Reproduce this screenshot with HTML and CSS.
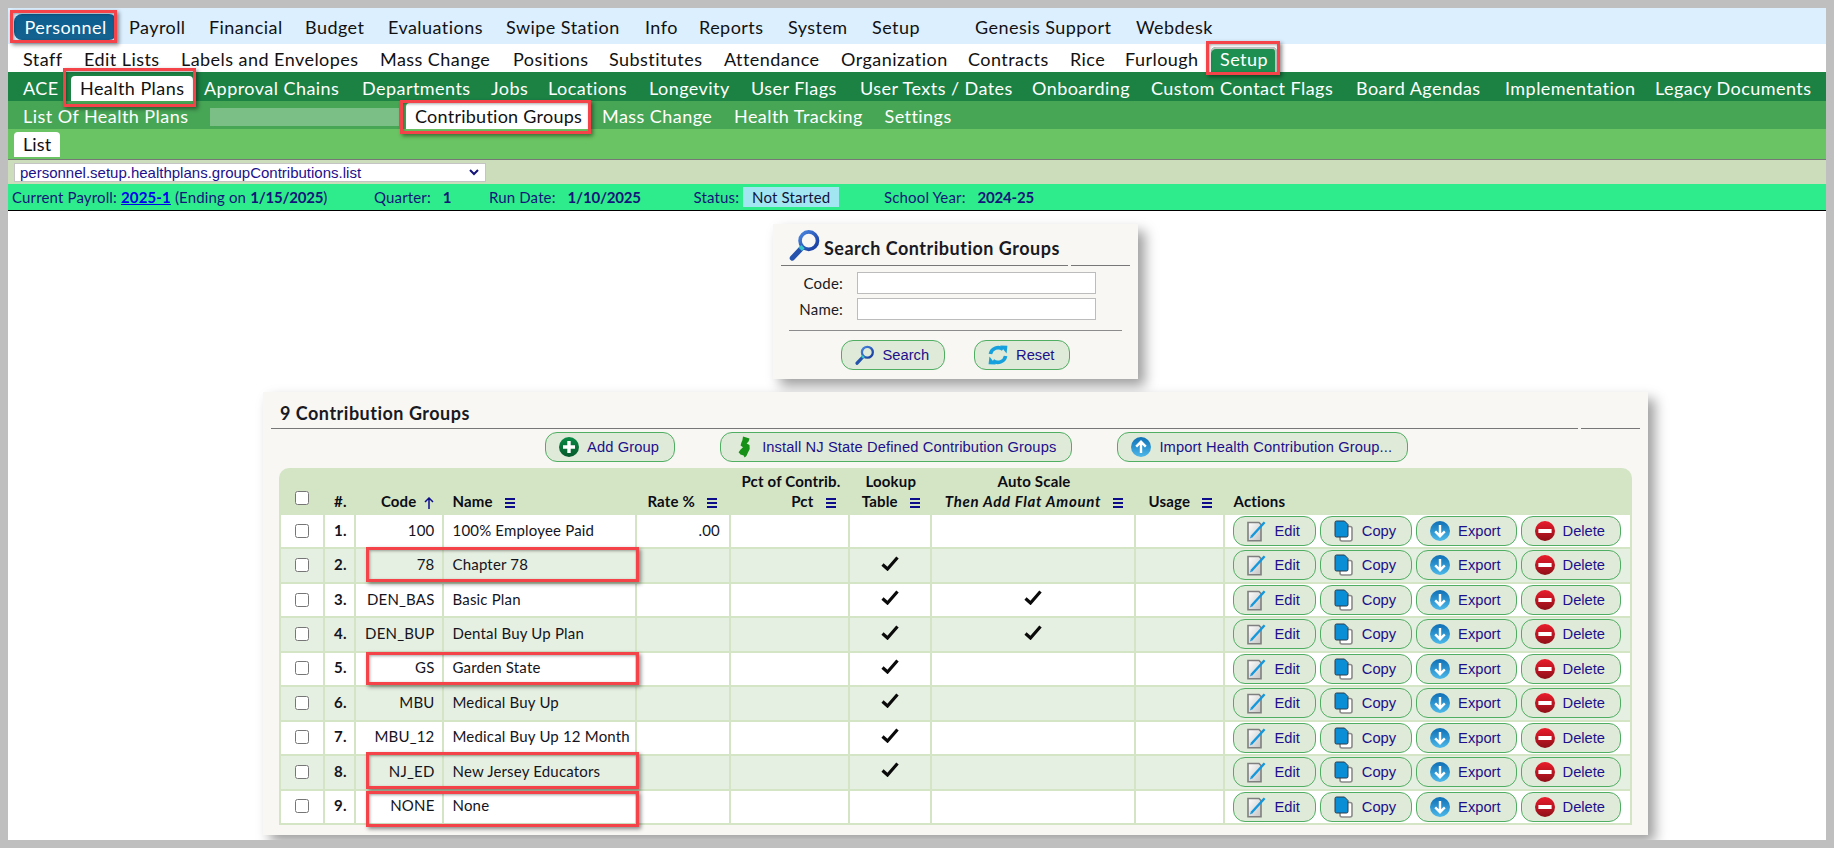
FILE: index.html
```html
<!DOCTYPE html>
<html lang="en">
<head>
<meta charset="utf-8">
<title>Contribution Groups</title>
<link rel="stylesheet" href="styles.css">
</head>
<body>
<svg class="defs" width="0" height="0" aria-hidden="true">
  <defs>
    <linearGradient id="gBlue" x1="0" y1="0" x2="0" y2="1"><stop offset="0" stop-color="#0f6fb5"/><stop offset="1" stop-color="#4db9ea"/></linearGradient>
    <linearGradient id="gRed" x1="0" y1="0" x2="0" y2="1"><stop offset="0" stop-color="#ea1c2c"/><stop offset="1" stop-color="#8f0f18"/></linearGradient>
    <linearGradient id="gGreen" x1="0" y1="0" x2="0" y2="1"><stop offset="0" stop-color="#0a8a45"/><stop offset="1" stop-color="#06592c"/></linearGradient>
    <linearGradient id="gDoc" x1="0" y1="0" x2="1" y2="1"><stop offset="0" stop-color="#ffffff"/><stop offset="1" stop-color="#c4c4c4"/></linearGradient>
    <linearGradient id="gLens" x1="0" y1="0" x2="1" y2="1"><stop offset="0" stop-color="#4a86e0"/><stop offset="1" stop-color="#14389c"/></linearGradient>
    <symbol id="i-search" viewBox="0 0 22 22">
      <circle cx="13.6" cy="8" r="6" fill="none" stroke="url(#gLens)" stroke-width="2.5"/>
      <path d="M2.3 20 8.6 13.2" stroke="#2553ad" stroke-width="3.6" stroke-linecap="round"/>
      <path d="M7.8 14 9.6 12.1" stroke="#35c3c9" stroke-width="3.2"/>
    </symbol>
    <symbol id="i-reset" viewBox="0 0 20 22">
      <path d="M2.4 10A7.8 7.8 0 0 1 15 5.4" fill="none" stroke="#16a0dd" stroke-width="3.6"/>
      <path d="M12.2 1.4 19.4 1.8 18.6 9.4Z" fill="#16a0dd"/>
      <path d="M17.6 12A7.8 7.8 0 0 1 5 16.6" fill="none" stroke="#16a0dd" stroke-width="3.6"/>
      <path d="M7.8 20.6 .6 20.2 1.4 12.6Z" fill="#16a0dd"/>
    </symbol>
    <symbol id="i-add" viewBox="0 0 20 20">
      <circle cx="10" cy="10" r="10" fill="url(#gGreen)"/>
      <path d="M10 4v12M4 10h12" stroke="#fff" stroke-width="3.4"/>
    </symbol>
    <symbol id="i-nj" viewBox="0 0 20 22">
      <path d="M9 .5 15.5 2.5 14.6 5.5 12.6 7.5 15.5 9 15.7 13 14 16.5 12.4 20 10.6 21.5 9.6 19.5 6.5 18.6 4.6 16.2 6.6 13.4 9 11.2 6.6 9.6 7.4 6.4 8.4 4.2Z" fill="#169016"/>
    </symbol>
    <symbol id="i-up" viewBox="0 0 20 20">
      <circle cx="10" cy="10" r="10" fill="url(#gBlue)"/>
      <path d="M10 16V5M5.2 9.6 10 4.8l4.8 4.8" fill="none" stroke="#fff" stroke-width="2.4"/>
    </symbol>
    <symbol id="i-down" viewBox="0 0 20 20">
      <circle cx="10" cy="10" r="10" fill="url(#gBlue)"/>
      <path d="M10 4v11M5.2 10.4 10 15.2l4.8-4.8" fill="none" stroke="#fff" stroke-width="2.4"/>
    </symbol>
    <symbol id="i-del" viewBox="0 0 20 20">
      <circle cx="10" cy="10" r="10" fill="url(#gRed)"/>
      <rect x="3.4" y="8" width="13.2" height="4" fill="#fff"/>
    </symbol>
    <symbol id="i-edit" viewBox="0 0 20 22">
      <path d="M1 2.5H12L14 4.5V20.8H1Z" fill="url(#gDoc)" stroke="#7f7f7f" stroke-width="1.6"/>
      <path d="M4.4 16.8 17.6 2.2" stroke="#1497dc" stroke-width="2.4"/>
      <path d="M2.9 18.6 4 15.8 5.4 17.2Z" fill="#1497dc"/>
    </symbol>
    <symbol id="i-copy" viewBox="0 0 20 22">
      <rect x="6" y="6.5" width="12" height="14.5" rx="2" fill="#fff" stroke="#8a8a8a" stroke-width="1.6"/>
      <path d="M2.5 1H10.5L14 4.5V15.5Q14 17 12.5 17H2.5Q1 17 1 15.5V2.5Q1 1 2.5 1Z" fill="#0a8fd6" stroke="#2c3a4a" stroke-width="1"/>
    </symbol>
    <symbol id="i-menu" viewBox="0 0 10 10">
      <path d="M0 0h10v2H0zM0 4h10v2H0zM0 8h10v2H0z" fill="#0d0d8c"/>
    </symbol>
    <symbol id="i-sort" viewBox="0 0 10 12">
      <path d="M5 12V1M1 5 5 1l4 4" fill="none" stroke="#0d0d8c" stroke-width="1.5"/>
    </symbol>
    <symbol id="i-check" viewBox="0 0 18 15">
      <path d="M1.5 8.5 6.5 13 16.5 1.5" fill="none" stroke="#0a0a0a" stroke-width="3.2"/>
    </symbol>
  </defs>
</svg>

<div class="app">
  <nav class="nav nav-main">
    <a class="tab tab-active-main">Personnel</a><a class="tab">Payroll</a><a class="tab">Financial</a><a class="tab">Budget</a><a class="tab">Evaluations</a><a class="tab">Swipe Station</a><a class="tab">Info</a><a class="tab">Reports</a><a class="tab">System</a><a class="tab">Setup</a><a class="tab">Genesis Support</a><a class="tab">Webdesk</a>
  </nav>
  <nav class="nav nav-sub">
    <a class="tab">Staff</a><a class="tab">Edit Lists</a><a class="tab">Labels and Envelopes</a><a class="tab">Mass Change</a><a class="tab">Positions</a><a class="tab">Substitutes</a><a class="tab">Attendance</a><a class="tab">Organization</a><a class="tab">Contracts</a><a class="tab">Rice</a><a class="tab">Furlough</a><a class="tab tab-active-green">Setup</a>
  </nav>
  <nav class="nav nav-setup">
    <a class="tab">ACE</a><a class="tab tab-active">Health Plans</a><a class="tab">Approval Chains</a><a class="tab">Departments</a><a class="tab">Jobs</a><a class="tab">Locations</a><a class="tab">Longevity</a><a class="tab">User Flags</a><a class="tab">User Texts / Dates</a><a class="tab">Onboarding</a><a class="tab">Custom Contact Flags</a><a class="tab">Board Agendas</a><a class="tab">Implementation</a><a class="tab">Legacy Documents</a>
  </nav>
  <nav class="nav nav-plans">
    <a class="tab">List Of Health Plans</a><span class="blur-block"></span><a class="tab tab-active">Contribution Groups</a><a class="tab">Mass Change</a><a class="tab">Health Tracking</a><a class="tab">Settings</a>
  </nav>
  <nav class="nav nav-list">
    <a class="tab tab-active">List</a>
  </nav>
  <div class="page-picker">
    <select class="page-select"><option>personnel.setup.healthplans.groupContributions.list</option></select>
  </div>
  <div class="status-bar">
    <span class="status-item">Current Payroll:&nbsp;<a class="status-link">2025-1</a>&nbsp;(Ending on&nbsp;<b>1/15/2025</b>)</span>
    <span class="status-item status-gap">Quarter: <b>1</b></span>
    <span class="status-item status-gap">Run Date: <b>1/10/2025</b></span>
    <span class="status-item status-badge-wrap">Status: <span class="status-badge">Not Started</span></span>
    <span class="status-item status-gap">School Year: <b>2024-25</b></span>
  </div>

  <main class="content">
    <section class="card search-card">
      <header class="card-head search-head">
        <h2 class="card-title search-title"><svg class="search-big"><use href="#i-search"/></svg>Search Contribution Groups</h2>
        <span class="card-fill"></span>
      </header>
      <form class="search-form">
        <label class="field-label">Code:</label><input class="field-input" type="text">
        <label class="field-label">Name:</label><input class="field-input" type="text">
      </form>
      <div class="search-actions">
        <button class="btn" type="button"><svg class="ico"><use href="#i-search"/></svg>Search</button>
        <button class="btn" type="button"><svg class="ico"><use href="#i-reset"/></svg>Reset</button>
      </div>
    </section>

    <section class="card list-card">
      <header class="card-head list-head">
        <h2 class="card-title list-title">9 Contribution Groups</h2>
        <span class="card-fill"></span>
      </header>
      <div class="toolbar">
        <button class="btn" type="button"><svg class="ico"><use href="#i-add"/></svg>Add Group</button>
        <button class="btn" type="button"><svg class="ico"><use href="#i-nj"/></svg>Install NJ State Defined Contribution Groups</button>
        <button class="btn" type="button"><svg class="ico"><use href="#i-up"/></svg>Import Health Contribution Group...</button>
      </div>
      <table class="grid">
        <colgroup>
          <col class="c-check"><col class="c-num"><col class="c-code"><col class="c-name"><col class="c-rate"><col class="c-pct"><col class="c-look"><col class="c-auto"><col class="c-usage"><col class="c-act">
        </colgroup>
        <thead>
          <tr>
            <th class="center"><input class="check" type="checkbox"></th>
            <th>#.</th>
            <th class="right code-head">Code<svg class="sort"><use href="#i-sort"/></svg></th>
            <th>Name<svg class="menu"><use href="#i-menu"/></svg></th>
            <th class="right">Rate %<svg class="menu"><use href="#i-menu"/></svg></th>
            <th class="right">Pct of Contrib.<br>Pct<svg class="menu"><use href="#i-menu"/></svg></th>
            <th class="center">Lookup<br>Table<svg class="menu"><use href="#i-menu"/></svg></th>
            <th class="center">Auto Scale<br><i>Then Add Flat Amount</i><svg class="menu"><use href="#i-menu"/></svg></th>
            <th class="center">Usage<svg class="menu"><use href="#i-menu"/></svg></th>
            <th>Actions</th>
          </tr>
        </thead>
        <tbody>
          <tr>
            <td class="center"><input class="check" type="checkbox"></td><td class="num">1.</td><td class="right">100</td><td>100% Employee Paid</td><td class="right">.00</td><td></td><td></td><td></td><td></td>
            <td class="actions"><div class="action-row"><button class="btn" type="button"><svg class="ico"><use href="#i-edit"/></svg>Edit</button><button class="btn" type="button"><svg class="ico"><use href="#i-copy"/></svg>Copy</button><button class="btn" type="button"><svg class="ico"><use href="#i-down"/></svg>Export</button><button class="btn" type="button"><svg class="ico"><use href="#i-del"/></svg>Delete</button></div></td>
          </tr>
          <tr>
            <td class="center"><input class="check" type="checkbox"></td><td class="num">2.</td><td class="right">78</td><td>Chapter 78</td><td></td><td></td><td class="center"><svg class="tick"><use href="#i-check"/></svg></td><td></td><td></td>
            <td class="actions"><div class="action-row"><button class="btn" type="button"><svg class="ico"><use href="#i-edit"/></svg>Edit</button><button class="btn" type="button"><svg class="ico"><use href="#i-copy"/></svg>Copy</button><button class="btn" type="button"><svg class="ico"><use href="#i-down"/></svg>Export</button><button class="btn" type="button"><svg class="ico"><use href="#i-del"/></svg>Delete</button></div></td>
          </tr>
          <tr>
            <td class="center"><input class="check" type="checkbox"></td><td class="num">3.</td><td class="right">DEN_BAS</td><td>Basic Plan</td><td></td><td></td><td class="center"><svg class="tick"><use href="#i-check"/></svg></td><td class="center"><svg class="tick"><use href="#i-check"/></svg></td><td></td>
            <td class="actions"><div class="action-row"><button class="btn" type="button"><svg class="ico"><use href="#i-edit"/></svg>Edit</button><button class="btn" type="button"><svg class="ico"><use href="#i-copy"/></svg>Copy</button><button class="btn" type="button"><svg class="ico"><use href="#i-down"/></svg>Export</button><button class="btn" type="button"><svg class="ico"><use href="#i-del"/></svg>Delete</button></div></td>
          </tr>
          <tr>
            <td class="center"><input class="check" type="checkbox"></td><td class="num">4.</td><td class="right">DEN_BUP</td><td>Dental Buy Up Plan</td><td></td><td></td><td class="center"><svg class="tick"><use href="#i-check"/></svg></td><td class="center"><svg class="tick"><use href="#i-check"/></svg></td><td></td>
            <td class="actions"><div class="action-row"><button class="btn" type="button"><svg class="ico"><use href="#i-edit"/></svg>Edit</button><button class="btn" type="button"><svg class="ico"><use href="#i-copy"/></svg>Copy</button><button class="btn" type="button"><svg class="ico"><use href="#i-down"/></svg>Export</button><button class="btn" type="button"><svg class="ico"><use href="#i-del"/></svg>Delete</button></div></td>
          </tr>
          <tr>
            <td class="center"><input class="check" type="checkbox"></td><td class="num">5.</td><td class="right">GS</td><td>Garden State</td><td></td><td></td><td class="center"><svg class="tick"><use href="#i-check"/></svg></td><td></td><td></td>
            <td class="actions"><div class="action-row"><button class="btn" type="button"><svg class="ico"><use href="#i-edit"/></svg>Edit</button><button class="btn" type="button"><svg class="ico"><use href="#i-copy"/></svg>Copy</button><button class="btn" type="button"><svg class="ico"><use href="#i-down"/></svg>Export</button><button class="btn" type="button"><svg class="ico"><use href="#i-del"/></svg>Delete</button></div></td>
          </tr>
          <tr>
            <td class="center"><input class="check" type="checkbox"></td><td class="num">6.</td><td class="right">MBU</td><td>Medical Buy Up</td><td></td><td></td><td class="center"><svg class="tick"><use href="#i-check"/></svg></td><td></td><td></td>
            <td class="actions"><div class="action-row"><button class="btn" type="button"><svg class="ico"><use href="#i-edit"/></svg>Edit</button><button class="btn" type="button"><svg class="ico"><use href="#i-copy"/></svg>Copy</button><button class="btn" type="button"><svg class="ico"><use href="#i-down"/></svg>Export</button><button class="btn" type="button"><svg class="ico"><use href="#i-del"/></svg>Delete</button></div></td>
          </tr>
          <tr>
            <td class="center"><input class="check" type="checkbox"></td><td class="num">7.</td><td class="right">MBU_12</td><td>Medical Buy Up 12 Month</td><td></td><td></td><td class="center"><svg class="tick"><use href="#i-check"/></svg></td><td></td><td></td>
            <td class="actions"><div class="action-row"><button class="btn" type="button"><svg class="ico"><use href="#i-edit"/></svg>Edit</button><button class="btn" type="button"><svg class="ico"><use href="#i-copy"/></svg>Copy</button><button class="btn" type="button"><svg class="ico"><use href="#i-down"/></svg>Export</button><button class="btn" type="button"><svg class="ico"><use href="#i-del"/></svg>Delete</button></div></td>
          </tr>
          <tr>
            <td class="center"><input class="check" type="checkbox"></td><td class="num">8.</td><td class="right">NJ_ED</td><td>New Jersey Educators</td><td></td><td></td><td class="center"><svg class="tick"><use href="#i-check"/></svg></td><td></td><td></td>
            <td class="actions"><div class="action-row"><button class="btn" type="button"><svg class="ico"><use href="#i-edit"/></svg>Edit</button><button class="btn" type="button"><svg class="ico"><use href="#i-copy"/></svg>Copy</button><button class="btn" type="button"><svg class="ico"><use href="#i-down"/></svg>Export</button><button class="btn" type="button"><svg class="ico"><use href="#i-del"/></svg>Delete</button></div></td>
          </tr>
          <tr>
            <td class="center"><input class="check" type="checkbox"></td><td class="num">9.</td><td class="right">NONE</td><td>None</td><td></td><td></td><td></td><td></td><td></td>
            <td class="actions"><div class="action-row"><button class="btn" type="button"><svg class="ico"><use href="#i-edit"/></svg>Edit</button><button class="btn" type="button"><svg class="ico"><use href="#i-copy"/></svg>Copy</button><button class="btn" type="button"><svg class="ico"><use href="#i-down"/></svg>Export</button><button class="btn" type="button"><svg class="ico"><use href="#i-del"/></svg>Delete</button></div></td>
          </tr>
        </tbody>
      </table>
    </section>
  </main>

  <div class="mark mark-personnel"></div>
  <div class="mark mark-setup"></div>
  <div class="mark mark-health"></div>
  <div class="mark mark-contrib"></div>
  <div class="mark mark-row mark-r2"></div>
  <div class="mark mark-row mark-r5"></div>
  <div class="mark mark-row mark-r8"></div>
  <div class="mark mark-row mark-r9"></div>
</div>
</body>
</html>
```
FILE: styles.css
```css
* { box-sizing: border-box; }
html, body { margin: 0; height: 100%; }
body {
  background: #bfbfbf;
  padding: 8px;
  overflow: hidden;
  font-family: Lato, "Noto Sans", sans-serif;
  color: #111;
}
.defs { position: absolute; }
.app {
  position: relative;
  width: 1818px;
  height: 832px;
  background: #fff;
  overflow: hidden;
}

/* Navigation rows */
.nav {
  display: grid;
  align-items: end;
  font-size: 18px;
  letter-spacing: .45px;
  padding-left: 6px;
}
.tab {
  justify-self: start;
  height: 25px;
  line-height: 25px;
  padding: 0 9px;
  white-space: nowrap;
}
.nav-main {
  height: 36px;
  background: #dcefff;
  padding-bottom: 4px;
  grid-template-columns: 106px 80px 96px 83px 118px 139px 54px 89px 84px 103px 161px auto;
}
.nav-main .tab { height: 26px; line-height: 27px; }
.tab-active-main {
  background: linear-gradient(#0c5f91, #14628f);
  color: #fff;
  border-radius: 8px;
  padding: 0 10.5px;
}
.nav-sub {
  height: 28px;
  background: #fff;
  grid-template-columns: 61px 97px 199px 133px 96px 115px 117px 127px 102px 55px 95px auto;
}
.tab-active-green {
  background: #1d8f50;
  color: #fff;
  border-radius: 5px 5px 0 0;
  box-shadow: inset 0 2px 0 #c4c4c4, inset -2px 0 0 #c4c4c4;
}
.nav-setup {
  height: 29px;
  background: #1b8244;
  color: #fff;
  grid-template-columns: 57px 124px 158px 129px 57px 101px 102px 109px 172px 119px 205px 149px 150px auto;
}
.tab-active { background: #fff; color: #111; border-radius: 4px 4px 0 0; }
.nav-plans {
  height: 28px;
  background: #47a556;
  color: #fff;
  grid-template-columns: 195.6px 196.4px 187px 132px 150.5px auto;
}
.nav-plans .tab { height: 26px; line-height: 27px; }
.nav-plans .tab-active { letter-spacing: .25px; }
.blur-block {
  width: 189px;
  height: 18px;
  margin-bottom: 3px;
  background: #7cbf86;
}
.nav-list {
  height: 31px;
  background: #6ac463;
  border-bottom: 1px solid #777;
  padding-bottom: 2px;
}
.nav-list .tab { letter-spacing: .1px; }

/* Page picker */
.page-picker {
  height: 24px;
  background: #cbddba;
  padding: 3px 6px 0;
}
.page-select {
  display: block;
  width: 472px;
  height: 19px;
  padding: 0 0 0 5px;
  appearance: none;
  border: 1px solid #c4c4c4;
  border-radius: 0;
  background: #fff url("data:image/svg+xml,%3Csvg xmlns='http://www.w3.org/2000/svg' width='10' height='7'%3E%3Cpath d='M1 1l4 4 4-4' fill='none' stroke='%2314147a' stroke-width='2'/%3E%3C/svg%3E") no-repeat right 6px center;
  color: #1c108c;
  font: 15px "Liberation Sans", Arial, sans-serif;
}

/* Status bar */
.status-bar {
  display: grid;
  grid-template-columns: 362px 115px 204.5px 190.5px auto;
  align-items: center;
  height: 27px;
  padding: 0 0 1px 4px;
  background: #2eec8b;
  border-bottom: 1px solid #000;
  color: #14147a;
  font-size: 15px;
  letter-spacing: .15px;
}
.status-item { display: flex; align-items: center; white-space: nowrap; }
.status-gap { gap: 12px; }
.status-badge-wrap { gap: 4px; }
.status-item b { font-weight: 700; letter-spacing: -.2px; }
.status-link { color: #0000ee; font-weight: 700; text-decoration: underline; }
.status-badge {
  height: 20px;
  line-height: 20px;
  padding: 0 9px;
  background: #a2e6f2;
  color: #14143a;
}

/* Content */
.content { display: flex; flex-direction: column; align-items: flex-start; }
.card {
  background: #f8f7f4;
  padding: 0 8px;
  box-shadow: 7px 7px 12px rgba(0, 0, 0, .38);
}
.card-head { display: flex; gap: 3px; }
.card-title {
  margin: 0;
  border-bottom: 1px solid #777;
  font-size: 18px;
  line-height: 22px;
  font-weight: 700;
  letter-spacing: .5px;
  color: #1a1a22;
}
.card-fill { flex: 1; border-bottom: 1px solid #777; }

.search-card {
  width: 365px;
  height: 155px;
  margin: 13px 0 0 765px;
}
.search-head { height: 42px; }
.search-title {
  display: flex;
  align-items: flex-end;
  flex: 0 0 287px;
  padding: 0 0 6px 8px;
  white-space: nowrap;
}
.search-big { width: 32px; height: 32px; margin: 0 3px -2px 0; flex: none; }
.search-form {
  display: grid;
  grid-template-columns: 62px 239px;
  column-gap: 14px;
  row-gap: 4px;
  align-items: center;
  padding-top: 6px;
  width: 322px;
}
.field-label {
  text-align: right;
  font-size: 15px;
  letter-spacing: .2px;
  color: #1a1a22;
}
.field-input {
  height: 22px;
  border: 1px solid #bcbcbc;
  background: #fff;
  padding: 0;
}
.search-actions {
  display: flex;
  justify-content: center;
  gap: 29px;
  margin: 10px 8px 0;
  padding-top: 9px;
  border-top: 1px solid #8c8c8c;
}

.btn {
  display: inline-flex;
  align-items: center;
  gap: 8px;
  height: 30px;
  padding: 0 15px 0 13px;
  border: 1px solid #4fae62;
  border-radius: 12px;
  background: #e0ead8;
  color: #1c108c;
  font: 14.7px "Liberation Sans", Arial, sans-serif;
  white-space: nowrap;
}
.ico { width: 20px; height: 22px; flex: none; }

.list-card {
  width: 1385px;
  height: 443px;
  margin: 13px 0 0 255px;
}
.list-head { height: 37px; }
.list-title {
  flex: 0 0 1307px;
  padding: 10px 0 0 9px;
}
.toolbar {
  display: flex;
  gap: 45px;
  margin: 3px 0 6px 274px;
}
.toolbar .btn { letter-spacing: .12px; }

/* Table */
.grid {
  width: 1352.5px;
  margin-left: 8px;
  table-layout: fixed;
  border-collapse: separate;
  border-spacing: 0;
  font-size: 15px;
  letter-spacing: .18px;
  color: #14141c;
}
.c-check { width: 46px; }
.c-num { width: 31px; }
.c-code { width: 87.5px; }
.c-name { width: 193px; }
.c-rate { width: 94.5px; }
.c-pct { width: 118.5px; }
.c-look { width: 82.5px; }
.c-auto { width: 204px; }
.c-usage { width: 88.5px; }
.c-act { width: 407px; }
.grid th {
  height: 47px;
  padding: 0 9px 4px;
  background: #d4e5c6;
  vertical-align: bottom;
  text-align: left;
  font-size: 15px;
  line-height: 20px;
  font-weight: 700;
  color: #0c0c14;
  white-space: nowrap;
}
.grid th i { letter-spacing: .7px; }
.grid th:first-child { border-top-left-radius: 10px; }
.grid th:last-child { border-top-right-radius: 10px; }
.grid td {
  height: 34.44px;
  padding: 0 9px 3px;
  background: #fff;
  border-right: 2px solid #d4e5c6;
  border-bottom: 2px solid #d4e5c6;
  vertical-align: middle;
  white-space: nowrap;
}
.grid tbody tr:nth-child(even) td { background: #e6f0e2; }
.grid td:first-child { border-left: 2px solid #d4e5c6; }
.grid .right { text-align: right; }
.grid th.center { text-align: center; padding-left: 0; padding-right: 0; }
.grid td.center { text-align: center; padding: 0 0 1px; }
.grid td:nth-child(3) { padding-right: 7px; }
.grid td.num { font-weight: 700; }
.grid td.actions { padding: 0 0 0 8px; vertical-align: top; }
.action-row { display: flex; gap: 4px; padding-top: 1px; }
.check {
  display: block;
  width: 14px;
  height: 14px;
  margin: 0 auto;
}
th .check { margin-bottom: 6px; }
.menu { width: 10px; height: 10px; margin-left: 12px; vertical-align: -1px; }
.grid th.right .menu { margin-right: 5px; }
.sort { width: 10px; height: 12px; margin-left: 7px; vertical-align: -2px; }
.grid th.code-head { padding-right: 10px; }
.tick { display: block; width: 18px; height: 15px; margin: -4px auto 0; }

/* Red annotation boxes laid over the screenshot */
.mark {
  position: absolute;
  pointer-events: none;
  border: 3px solid #f4444a;
  box-shadow: 2px 2px 4px rgba(0, 0, 0, .45), inset 1px 1px 3px rgba(0, 0, 0, .35);
}
.mark-personnel { left: 2px; top: 2px; width: 107px; height: 33px; }
.mark-setup { left: 1198px; top: 33px; width: 74px; height: 34px; }
.mark-health { left: 54.5px; top: 60px; width: 133.5px; height: 39px; }
.mark-contrib { left: 392px; top: 92px; width: 191px; height: 34px; }
.mark-row { left: 358px; width: 273px; }
.mark-r2 { top: 539px; height: 35px; }
.mark-r5 { top: 644px; height: 33px; }
.mark-r8 { top: 744px; height: 37px; }
.mark-r9 { top: 783px; height: 36px; }
```
